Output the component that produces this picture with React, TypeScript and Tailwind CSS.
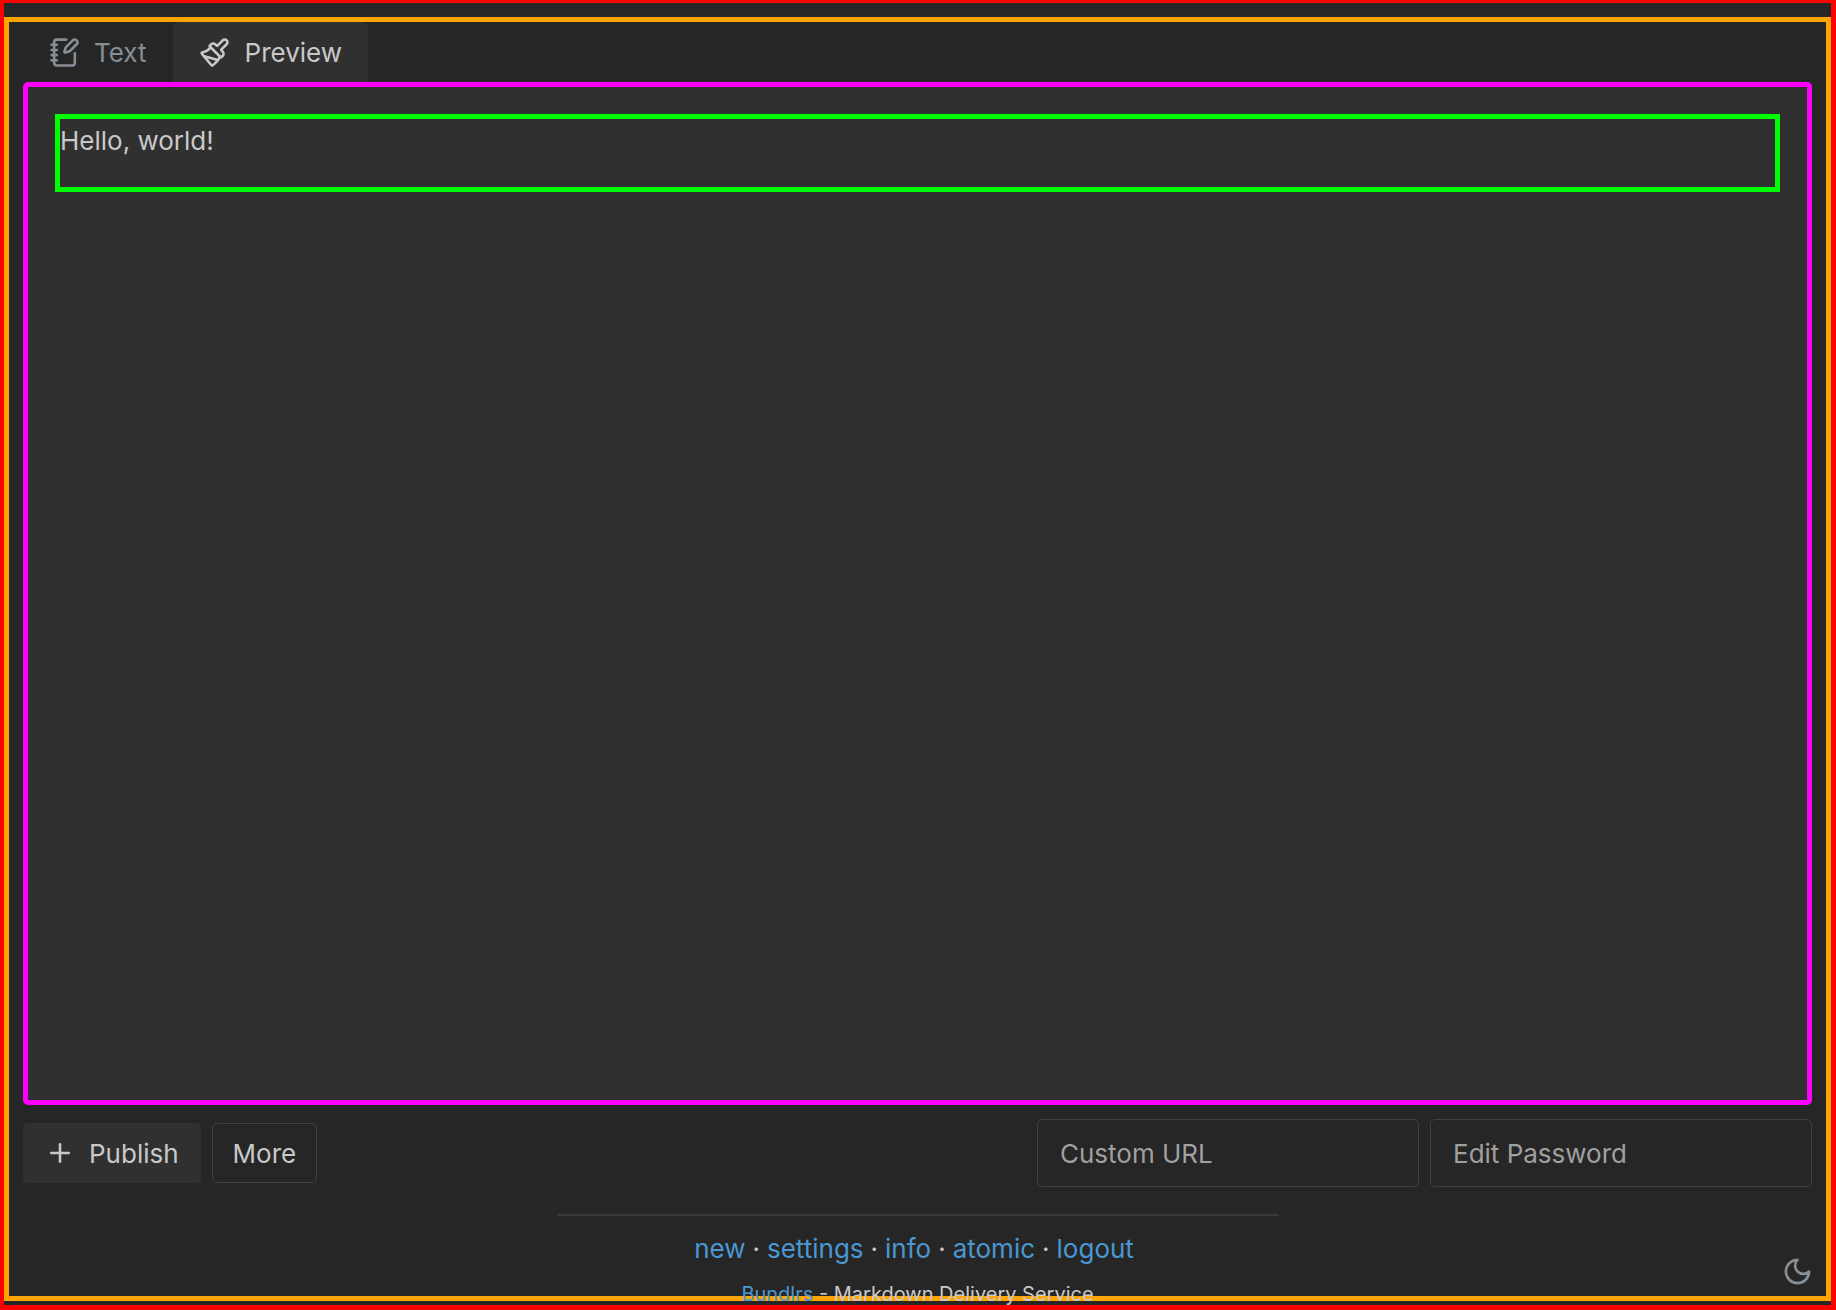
import { useState } from "react";
import { NotebookPen, Paintbrush, Plus } from "lucide-react";

const links = ["new", "settings", "info", "atomic", "logout"];

function MoonIcon() {
  return (
    <svg
      viewBox="0 0 24 24"
      className="size-[31px]"
      fill="none"
      stroke="currentColor"
      strokeWidth="2"
      strokeLinecap="round"
      strokeLinejoin="round"
      aria-hidden="true"
    >
      <path d="M12 3a6 6 0 0 0 9 9 9 9 0 1 1-9-9Z" />
    </svg>
  );
}

export default function App() {
  const [url, setUrl] = useState("");
  const [password, setPassword] = useState("");

  return (
    <div className="relative flex h-screen flex-col overflow-hidden border-5 border-t-3 border-l-4 border-[#ff0000] bg-[#262626] pt-[14px] pb-1 font-['Inter',sans-serif] text-[26px] leading-10 text-[#c9c9c9]">
      <main className="flex min-h-0 flex-1 flex-col border-5 border-[#ffa500] px-[14px]">
        <div role="tablist" className="flex h-[60px] shrink-0">
          <button role="tab" aria-selected="false" className="flex items-center gap-[14px] px-[26px] text-[#868e96]">
            <NotebookPen size={31} />
            <span className="pt-0.5">Text</span>
          </button>
          <button
            role="tab"
            aria-selected="true"
            className="flex items-center gap-[15px] rounded-t-[5px] bg-[#303030] px-[26px]"
          >
            <Paintbrush size={31} />
            <span className="pt-0.5">Preview</span>
          </button>
        </div>

        <section role="tabpanel" className="min-h-0 flex-1 rounded-[5px] border-5 border-[#ff00ff] bg-[#303030] p-[27px]">
          <div className="h-[78px] border-5 border-[#00ff00]">
            <p className="leading-[44px]">Hello, world!</p>
          </div>
        </section>

        <form className="mt-[14px] flex shrink-0 items-center justify-between" onSubmit={(e) => e.preventDefault()}>
          <div className="flex gap-[11px]">
            <button type="submit" className="flex h-[60px] items-center gap-[14px] rounded-[5px] bg-[#303030] px-[22px]">
              <Plus size={30} />
              <span className="pt-0.5">Publish</span>
            </button>
            <button type="button" className="h-[60px] rounded-[5px] border border-[#424242] px-5 pt-0.5">
              More
            </button>
          </div>
          <div className="flex gap-[11px]">
            <input
              aria-label="Custom URL"
              placeholder="Custom URL"
              value={url}
              onChange={(e) => setUrl(e.target.value)}
              className="h-[68px] w-[382px] rounded-[5px] border border-[#424242] px-[22px] placeholder:text-[#a0a0a0]"
            />
            <input
              aria-label="Edit Password"
              placeholder="Edit Password"
              value={password}
              onChange={(e) => setPassword(e.target.value)}
              className="h-[68px] w-[382px] rounded-[5px] border border-[#424242] px-[22px] placeholder:text-[#a0a0a0]"
            />
          </div>
        </form>

        <footer className="-mx-2 -mb-[13px] flex shrink-0 flex-col items-center pt-[27px]">
          <hr className="w-2/5 border-t-2 border-[#3a3a3a]" />
          <nav className="mt-[13px] flex gap-[7px] pr-[7px]">
            {links.map((name, i) => (
              <span key={name} className="flex gap-[7px]">
                {i > 0 && <span>·</span>}
                <a href="#" className="text-[#4a97d2]">
                  {name}
                </a>
              </span>
            ))}
          </nav>
          <p className="mt-[10px] text-xl leading-[30px]">
            <a href="#" className="text-[#4a97d2]">
              Bundlrs
            </a>{" "}
            - Markdown Delivery Service
          </p>
        </footer>
      </main>

      <button aria-label="Toggle theme" className="absolute right-[18px] bottom-[18px] text-[#868e96]">
        <MoonIcon />
      </button>
    </div>
  );
}
